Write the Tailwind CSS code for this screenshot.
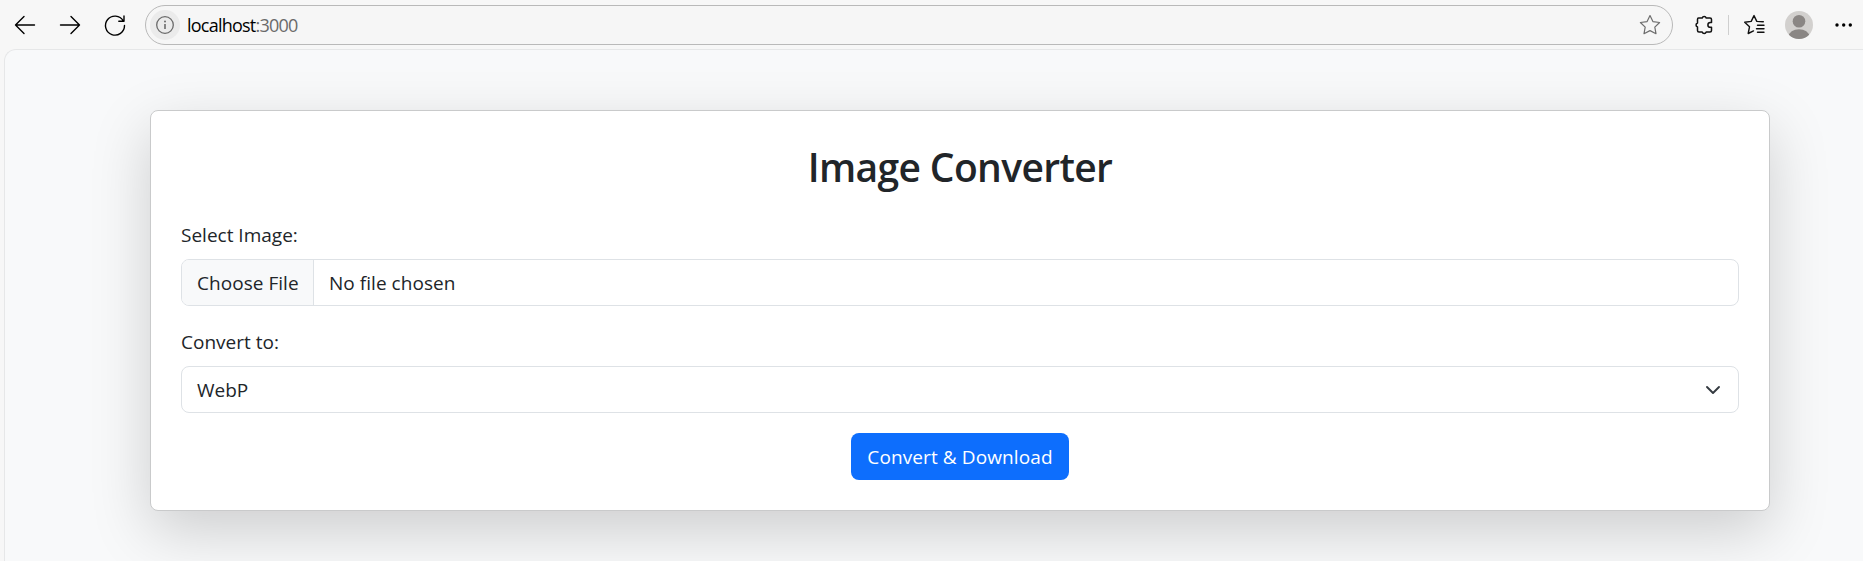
<!DOCTYPE html>
<html lang="en">
<head>
<meta charset="utf-8">
<title>Image Converter</title>
<script src="https://cdn.jsdelivr.net/npm/@tailwindcss/browser@4"></script>
</head>
<body class="w-[1863px] h-[561px] overflow-hidden bg-[#f7f7f7] flex flex-col font-['Open_Sans','Noto_Sans',sans-serif] text-[#212529]">
<header class="h-[49px] shrink-0 flex items-center">
  <div class="flex items-center gap-[21px] pl-[13px] text-black">
    <svg class="size-6" viewBox="0 0 24 24" fill="none" stroke="currentColor" stroke-width="1.4" stroke-linecap="round" stroke-linejoin="round"><path d="M21.500 12H2.500M11 3.500 2.500 12l8.500 8.500"/></svg>
    <svg class="size-6" viewBox="0 0 24 24" fill="none" stroke="currentColor" stroke-width="1.4" stroke-linecap="round" stroke-linejoin="round"><path d="M2.500 12h19M13 3.500l8.500 8.500-8.500 8.500"/></svg>
    <svg class="size-6" viewBox="0 0 24 24" fill="none" stroke="currentColor" stroke-width="1.4" stroke-linecap="round" stroke-linejoin="round"><path d="M20.200 7.800A9.500 9.500 0 1 0 21.500 12.500M21 3v5.300h-5.200"/></svg>
  </div>
  <div class="ml-[18px] w-[1528px] h-[40px] rounded-full border border-[#b9b9b9] bg-[#f6f6f6] flex items-center pl-1 pr-[11px]">
    <span class="size-[30px] rounded-full bg-[#ebebeb] flex items-center justify-center">
      <svg class="size-5" viewBox="0 0 20 20" fill="none" stroke="#6b6b6b" stroke-width="1.3"><circle cx="10" cy="10" r="8.300"/><path d="M10 9v5" stroke-width="1.6"/><circle cx="10" cy="6.500" r="1" fill="#6b6b6b" stroke="none"/></svg>
    </span>
    <span class="ml-[7px] text-[18px] leading-6 tracking-[-0.77px] text-black whitespace-nowrap"><span>localhost</span><span class="text-[#6a6a6a]">:3000</span></span>
    <svg class="ml-auto size-[22px]" viewBox="0 0 22 22" fill="none" stroke="#6e6e6e" stroke-width="1.2" stroke-linejoin="round"><path d="M11 1.600 13.900 7.600 20.600 8.500 15.800 13.100 17 19.700 11 16.600 5 19.700 6.200 13.100 1.400 8.500 8.100 7.600Z"/></svg>
  </div>
  <svg class="ml-[20px] size-[22px]" viewBox="0 0 22 22" fill="none" stroke="#111" stroke-width="1.5" stroke-linejoin="round"><path d="M5.500 4H9.200A2.100 2.100 0 0 1 13.200 4H17Q18.500 4 18.500 5.500V8.500H17.300A2.400 2.400 0 0 0 17.300 13.300H18.500V16.500Q18.500 18 17 18H13.200A2.100 2.100 0 0 1 9.200 18H6Q4.500 18 4.500 16.500V13A2.100 2.100 0 0 1 4.500 9V5.500Q4.500 4 5.500 4Z"/></svg>
  <span class="ml-[13px] w-px h-5 bg-[#cfcfcf]"></span>
  <svg class="ml-[14px] size-[22px]" viewBox="0 0 22 22" fill="none" stroke="#111" stroke-width="1.4" stroke-linejoin="round" stroke-linecap="round"><path d="M20.300 7.800 13.800 7.400 11 1.600 8.200 7.400 1.700 8.200 6.500 12.800 5.200 19.500 10.500 16.900M14.500 11.300h6.500M13.500 14.800h7.500M14.500 18.300h6.500"/></svg>
  <svg class="ml-[20px] size-7" viewBox="0 0 28 28"><defs><clipPath id="face"><circle cx="14" cy="14" r="14"/></clipPath></defs><g clip-path="url(#face)"><rect width="28" height="28" fill="#d2d0ce"/><circle cx="14" cy="10.300" r="6.300" fill="#8a8684"/><ellipse cx="14" cy="25.500" rx="10.300" ry="7.300" fill="#8a8684"/></g></svg>
  <svg class="ml-[22px] w-[18px] h-1" viewBox="0 0 18 4"><circle cx="2" cy="2" r="1.700"/><circle cx="8.700" cy="2" r="1.700"/><circle cx="15.300" cy="2" r="1.700"/></svg>
</header>
<main class="ml-[4px] flex-1 rounded-tl-[12px] border-t border-l border-[#e6e7e8] bg-[#f8f9fa] pt-[60px] pl-[145px] overflow-hidden">
  <section class="w-[1620px] h-[401px] rounded-[8px] border border-[#c9cacb] bg-white p-[30px] shadow-[0_20px_60px_rgba(0,0,0,0.175)]">
    <h1 class="pt-[2px] h-[48px] text-center text-[39px] leading-[48px] tracking-[-0.65px] font-semibold">Image Converter</h1>
    <label class="block mt-[30px] h-[30px] text-[19px] leading-[32px]">Select Image:</label>
    <div class="mt-[10px] h-[47px] rounded-[8px] border border-[#dee2e6] flex overflow-hidden text-[19px] leading-[47px] tracking-[0.04px]">
      <span class="w-[132px] bg-[#f8f9fa] border-r border-[#dee2e6] pl-[15px] whitespace-nowrap">Choose File</span>
      <span class="pl-[15px]">No file chosen</span>
    </div>
    <label class="block mt-[20px] h-[30px] text-[19px] leading-[32px]">Convert to:</label>
    <div class="mt-[10px] h-[47px] rounded-[8px] border border-[#dee2e6] flex items-center justify-between pl-[15px] pr-[16px] text-[19px]">
      <span class="pt-[2px]">WebP</span>
      <svg class="size-[18px]" viewBox="0 0 18 18" fill="none" stroke="#343a40" stroke-width="1.9" stroke-linecap="round" stroke-linejoin="round"><path d="m3 6 6 6 6-6"/></svg>
    </div>
    <div class="mt-[20px] flex justify-center">
      <button class="w-[218px] h-[47px] pt-[2px] rounded-[8px] bg-[#0d6efd] text-white text-[19px] tracking-[0.1px] whitespace-nowrap">Convert &amp; Download</button>
    </div>
  </section>
</main>
</body>
</html>
